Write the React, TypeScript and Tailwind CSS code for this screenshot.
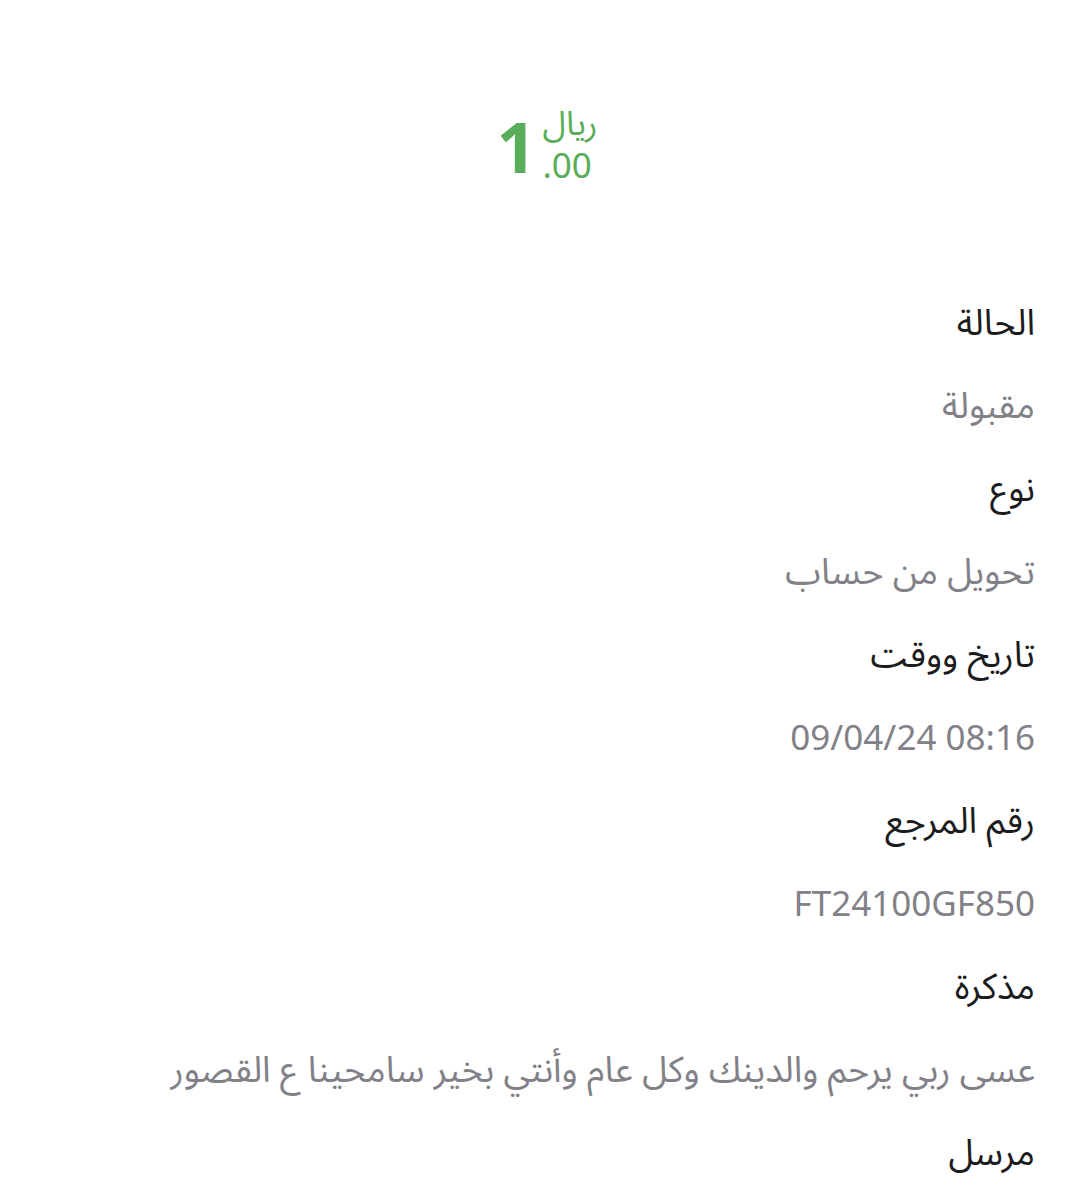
export default function App() {
  const rows: { label: string; value: string; latin?: boolean }[] = [
    { label: "الحالة", value: "مقبولة" },
    { label: "نوع", value: "تحويل من حساب" },
    { label: "تاريخ ووقت", value: "09/04/24 08:16", latin: true },
    { label: "رقم المرجع", value: "FT24100GF850", latin: true },
    { label: "مذكرة", value: "عسى ربي يرحم والدينك وكل عام وأنتي بخير سامحينا ع القصور" },
  ];

  return (
    <div
      dir="rtl"
      className="min-h-[1200px] w-[1084px] bg-white overflow-hidden"
      style={{ fontFamily: '"Noto Sans Arabic", "Noto Sans", "DejaVu Sans", sans-serif' }}
    >
      {/* Amount */}
      <div dir="ltr" className="flex justify-center pt-[106px] pl-[10px]">
        <div className="flex items-end gap-[8px] text-[#5aad5a]">
          <span className="text-[70px] font-bold leading-none tracking-[-2px] mb-[6px]">1</span>
          <div className="flex flex-col items-start">
            <span className="text-[34px] leading-[36px]">ريال</span>
            <span className="text-[35px] leading-[50px]">.00</span>
          </div>
        </div>
      </div>

      {/* Details */}
      <div className="mt-[91px] pr-[49px] flex flex-col">
        {rows.map((r) => (
          <div key={r.label} className="flex flex-col">
            <p className="text-[36px] leading-[82px] text-[#1c1c1e]">{r.label}</p>
            <p className={`leading-[84px] text-[#818187] ${r.latin ? "text-[35px]" : "text-[36px]"}`}>
              {r.latin ? <span dir="ltr">{r.value}</span> : r.value}
            </p>
          </div>
        ))}
        <p className="text-[36px] leading-[82px] text-[#1c1c1e]">مرسل</p>
      </div>
    </div>
  );
}
